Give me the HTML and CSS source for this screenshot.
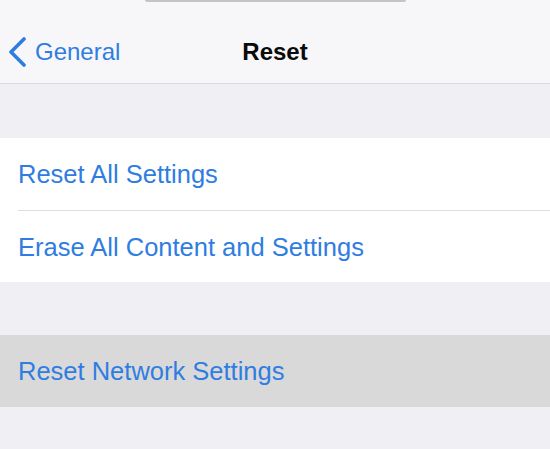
FILE: index.html
```html
<!DOCTYPE html>
<html lang="en">
<head>
  <meta charset="UTF-8">
  <meta name="viewport" content="width=device-width, initial-scale=1.0">
  <title>Reset</title>
  <link rel="stylesheet" href="styles.css">
</head>
<body>
  <header class="nav">
    <div class="notch"></div>
    <div class="nav-row">
      <a href="#" class="back">
        <svg class="chevron" width="18" height="30" viewBox="0 0 18 30">
          <polyline points="16,2 3,15 16,28" fill="none" stroke="#2f7de1" stroke-width="3.6" stroke-linecap="round" stroke-linejoin="round"/>
        </svg>
        <span>General</span>
      </a>
      <h1 class="title">Reset</h1>
      <div></div>
    </div>
  </header>

  <!-- first group -->
  <ul class="group">
    <li class="row">Reset All Settings</li>
    <li class="row">Erase All Content and Settings</li>
  </ul>

  <!-- second group, row is pressed -->
  <ul class="group">
    <li class="row pressed">Reset Network Settings</li>
  </ul>
</body>
</html>
```

FILE: styles.css
```css
body {
  margin: 0;
  background-color: #efeff4;
  font-family: "Liberation Sans", Arial, sans-serif;
  color: #2f7de1;
}
.nav {
  background-color: #f7f7f9;
  border-bottom: 1px solid #d9d9de;
  height: 83px;
}
.notch {
  width: 261px;
  height: 2px;
  margin: 0 auto;
  background-color: #c4c4c8;
  border-radius: 0 0 2px 2px;
}
.nav-row {
  display: grid;
  grid-template-columns: 1fr auto 1fr;
  align-items: center;
  height: 62px;
  padding-top: 19px;
}
.back {
  display: flex;
  align-items: center;
  gap: 9px;
  padding-left: 8px;
  color: #2f7de1;
  text-decoration: none;
  font-size: 24px;
  line-height: 24px;
}
.chevron {
  display: block;
}
.title {
  margin: 0;
  font-size: 24px;
  line-height: 24px;
  font-weight: bold;
  color: #0a0a0a;
}
.group {
  list-style: none;
  margin: 54px 0 0;
  padding: 0;
  background-color: #fff;
}
.group + .group {
  margin-top: 53px;
}
.row {
  display: flex;
  align-items: center;
  height: 72px;
  margin-left: 18px;
  font-size: 25.5px;
  line-height: 26px;
}
.row + .row {
  border-top: 1px solid #dedee2;
  height: 71px;
}
.pressed {
  background-color: #d9d9d9;
  margin-left: 0;
  padding-left: 18px;
}
```
